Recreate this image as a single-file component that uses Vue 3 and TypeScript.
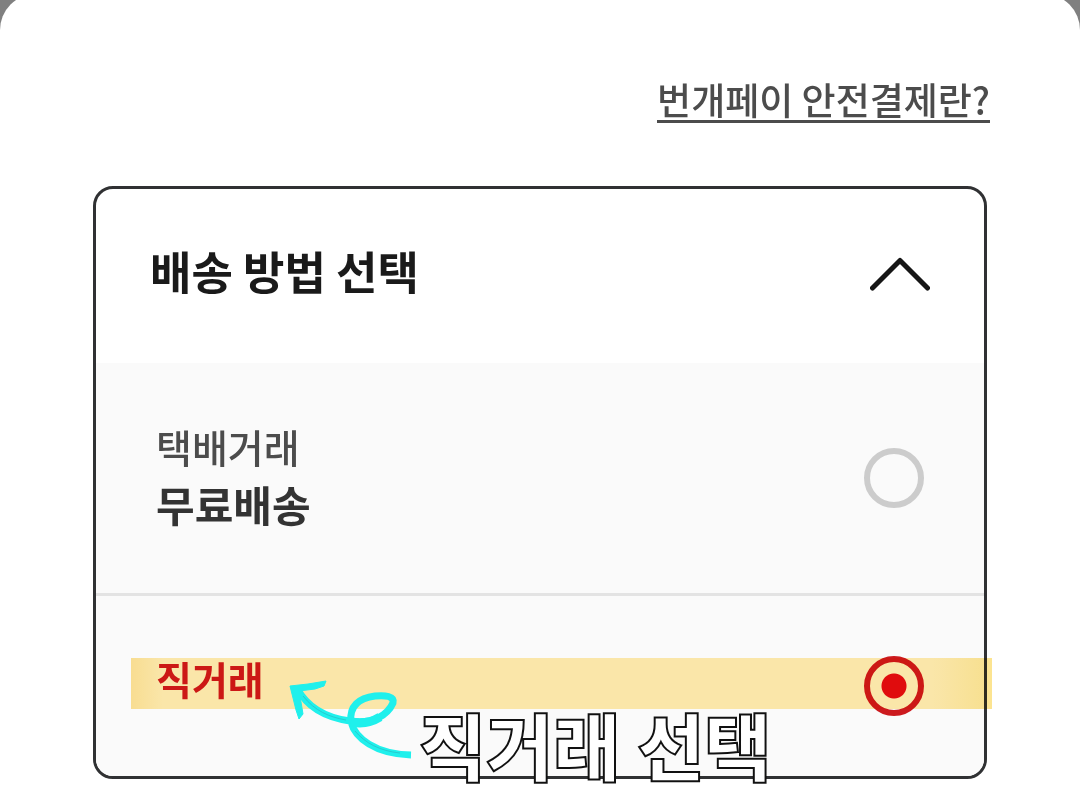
<script setup lang="ts">
import { ref } from 'vue'

type Method = 'parcel' | 'direct'

const open = ref(true)
const method = ref<Method>('direct')
</script>

<template>
  <div class="backdrop">
    <main class="sheet">
      <div class="help">
        <a href="#safe-pay">번개페이 안전결제란?</a>
      </div>

      <section class="card">
        <h2 class="heading">
          <button
            type="button"
            class="toggle"
            :aria-expanded="open"
            aria-controls="methods"
            @click="open = !open"
          >
            <span>배송 방법 선택</span>
            <svg class="chevron" :class="{ closed: !open }" viewBox="0 0 60 34" aria-hidden="true">
              <path d="M2.5 31 L30 3.5 L57.5 31" />
            </svg>
          </button>
        </h2>

        <div v-show="open" id="methods" class="methods">
          <label class="option parcel">
            <span class="text">
              <span class="name">택배거래</span>
              <strong class="price">무료배송</strong>
            </span>
            <input v-model="method" type="radio" name="method" value="parcel" />
          </label>

          <label class="option direct">
            <span class="text">
              <span class="name">직거래</span>
            </span>
            <input v-model="method" type="radio" name="method" value="direct" />
            <span class="marker" aria-hidden="true"></span>
            <svg class="arrow" viewBox="0 0 130 86" aria-hidden="true">
              <path class="shaft" d="M11 12 C22 33 42 42 64 45 C88 49 102 38 107 27 C109 20 99 19 89 20 C73 22 63 30 65 46 C69 62 89 78 125 79" />
              <path class="shaft inner" d="M65 46 C75 48 86 46 94 41" />
              <path class="head" d="M4 10 L22 8 L40 5 L38 10 L29 13 L13 15 L15 26 L17 38 L13 43 L10 34 Z" />
              <path class="grain" d="M17 20 C29 35 43 41 60 44 M69 55 C79 67 94 75 114 77" />
            </svg>
            <span class="callout">직거래 선택</span>
          </label>
        </div>
      </section>
    </main>
  </div>
</template>

<style>
body {
  margin: 0;
  background: #fff;
}
</style>

<style scoped>
.backdrop {
  overflow: hidden;
  background: #808080;
  font-family: "Noto Sans CJK KR", "Noto Sans", sans-serif;
}

.sheet {
  box-sizing: border-box;
  min-height: calc(100vh + 6px);
  margin-top: -6px;
  padding: 84px 93px 22px;
  border-radius: 36px 36px 0 0;
  background: #fff;
}

.help {
  display: flex;
  justify-content: flex-end;
  margin: 0 -3px 63px 0;
}

.help a {
  border-bottom: 3px solid #4c4c4c;
  color: #4c4c4c;
  font-size: 37px;
  font-weight: 500;
  line-height: 42px;
  text-decoration: none;
}

.card {
  border: 3px solid #303133;
  border-radius: 20px;
  background: #fff;
}

.heading {
  margin: 0;
}

.toggle {
  display: flex;
  align-items: center;
  justify-content: space-between;
  box-sizing: border-box;
  width: 100%;
  padding: 50px 54px 60px;
  border: 0;
  background: none;
  color: #1a1a1a;
  font: bold 45px/64px "Noto Sans CJK KR", "Noto Sans", sans-serif;
  text-align: left;
  cursor: pointer;
}

.chevron {
  width: 60px;
  height: 34px;
  margin-bottom: -6px;
  fill: none;
  stroke: #161616;
  stroke-width: 5;
  stroke-linecap: round;
  stroke-linejoin: round;
}

.chevron.closed {
  transform: rotate(180deg);
}

.methods {
  border-radius: 0 0 17px 17px;
  background: #fafafa;
}

.option {
  display: flex;
  align-items: center;
  justify-content: space-between;
  position: relative;
  padding: 0 60px;
  cursor: pointer;
}

.parcel {
  min-height: 230px;
  border-bottom: 3px solid #e3e3e3;
}

.direct {
  min-height: 180px;
}

.text {
  display: flex;
  flex-direction: column;
  padding-bottom: 6px;
}

.name {
  color: #4c4c4c;
  font-size: 39px;
  font-weight: 500;
  line-height: 58px;
}

.price {
  color: #333;
  font-size: 42px;
  line-height: 58px;
}

.direct .text {
  padding-bottom: 16px;
}

.direct .name {
  color: #cc1a1e;
  font-weight: bold;
}

input {
  appearance: none;
  box-sizing: border-box;
  flex: none;
  width: 60px;
  height: 60px;
  margin: 0;
  border: 6px solid #ccc;
  border-radius: 50%;
  cursor: pointer;
}

input:checked {
  border-color: #cc1a1e;
  background: radial-gradient(circle, #e00c12 12px, transparent 13px);
}

.marker {
  position: absolute;
  top: 62px;
  right: -8px;
  left: 35px;
  height: 51px;
  background: linear-gradient(90deg, #fde294, #ffebad 32px, #ffebad calc(100% - 60px), #fce490);
  mix-blend-mode: multiply;
  pointer-events: none;
}

.arrow {
  position: absolute;
  top: 80px;
  left: 190px;
  width: 130px;
  height: 86px;
  fill: none;
  stroke-linejoin: round;
  pointer-events: none;
}

.shaft {
  stroke: #1ff0ec;
  stroke-width: 7;
}

.inner {
  stroke-width: 9;
}

.head {
  fill: #1ff0ec;
  stroke: #1ff0ec;
  stroke-width: 1;
}

.grain {
  stroke: #28c9cf;
  stroke-width: 1;
}

.callout {
  position: absolute;
  top: 95px;
  left: 323px;
  color: #fff;
  font-size: 73px;
  font-weight: 900;
  line-height: 104px;
  white-space: nowrap;
  -webkit-text-stroke: 2px #111;
  pointer-events: none;
}
</style>
